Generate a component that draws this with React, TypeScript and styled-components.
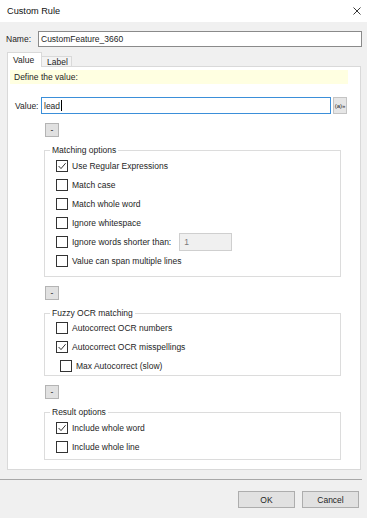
import React from 'react';
import styled, { createGlobalStyle } from 'styled-components';

interface Option {
  label: string;
  checked?: boolean;
  indent?: number;
  spin?: string;
}

interface Section {
  title: string;
  padTop: number;
  padBottom: number;
  options: Option[];
}

const sections: Section[] = [
  {
    title: 'Matching options',
    padTop: 1,
    padBottom: 6,
    options: [
      { label: 'Use Regular Expressions', checked: true },
      { label: 'Match case' },
      { label: 'Match whole word' },
      { label: 'Ignore whitespace' },
      { label: 'Ignore words shorter than:', spin: '1' },
      { label: 'Value can span multiple lines' },
    ],
  },
  {
    title: 'Fuzzy OCR matching',
    padTop: 0,
    padBottom: 0,
    options: [
      { label: 'Autocorrect OCR numbers' },
      { label: 'Autocorrect OCR misspellings', checked: true },
      { label: 'Max Autocorrect (slow)', indent: 4 },
    ],
  },
  {
    title: 'Result options',
    padTop: 1,
    padBottom: 3,
    options: [
      { label: 'Include whole word', checked: true },
      { label: 'Include whole line' },
    ],
  },
];

const App = () => {
  return (
    <Window>
      <GlobalStyle />
      <TitleBar>
        <Title>Custom Rule</Title>
        <CloseIcon viewBox="0 0 8 8">
          <path d="M0.5 0.5 L7.5 7.5 M7.5 0.5 L0.5 7.5" />
        </CloseIcon>
      </TitleBar>
      <Body>
        <NameRow>
          <NameLabel>Name:</NameLabel>
          <TextBox>CustomFeature_3660</TextBox>
        </NameRow>
        <TabStrip>
          <Tab $active>Value</Tab>
          <Tab>Label</Tab>
        </TabStrip>
        <TabPanel>
          <Hint>Define the value:</Hint>
          <ValueRow>
            <ValueLabel>Value:</ValueLabel>
            <TextBox $focused>
              lead
              <Caret />
            </TextBox>
            <InsertButton>(a)»</InsertButton>
          </ValueRow>
          {sections.map((section) => (
            <SectionBlock key={section.title}>
              <CollapseButton>-</CollapseButton>
              <GroupBox $padTop={section.padTop} $padBottom={section.padBottom}>
                <Caption>{section.title}</Caption>
                {section.options.map((opt) => (
                  <OptionRow key={opt.label} $indent={opt.indent || 0}>
                    <Checkbox>
                      {opt.checked && (
                        <svg width="10" height="10" viewBox="0 0 10 10">
                          <polyline
                            points="1.6,5 4,7.6 8.6,2.2"
                            fill="none"
                            stroke="#333"
                            strokeWidth="1"
                          />
                        </svg>
                      )}
                    </Checkbox>
                    <span>{opt.label}</span>
                    {opt.spin && <SpinBox>{opt.spin}</SpinBox>}
                  </OptionRow>
                ))}
              </GroupBox>
            </SectionBlock>
          ))}
        </TabPanel>
        <Separator />
        <Footer>
          <DialogButton>OK</DialogButton>
          <DialogButton>Cancel</DialogButton>
        </Footer>
      </Body>
    </Window>
  );
};

export default App;

const GlobalStyle = createGlobalStyle`
  html, body {
    margin: 0;
    padding: 0;
    background: #f0f0f0;
  }
  body {
    font-family: 'Liberation Sans', Arial, sans-serif;
    font-size: 8.5px;
    color: #1e1e1e;
  }
  * {
    box-sizing: border-box;
  }
`;

const Window = styled.div`
  width: 367px;
  height: 518px;
  display: flex;
  flex-direction: column;
  overflow: hidden;
  background: #f0f0f0;
`;

const TitleBar = styled.div`
  height: 22px;
  flex: none;
  display: flex;
  align-items: center;
  justify-content: space-between;
  padding: 0 6px 0 7px;
  background: #fff;
`;

const Title = styled.span`
  font-size: 9.2px;
  color: #111;
`;

const CloseIcon = styled.svg`
  width: 8px;
  height: 8px;
  stroke: #222;
  stroke-width: 0.9;
  fill: none;
`;

const Body = styled.div`
  flex: 1;
  display: flex;
  flex-direction: column;
  padding: 9px 5px 0 6px;
`;

const NameRow = styled.div`
  display: flex;
  align-items: center;
  height: 16px;
`;

const NameLabel = styled.span`
  width: 32px;
  flex: none;
`;

const TextBox = styled.div<{ $focused?: boolean }>`
  flex: 1;
  height: ${(p) => (p.$focused ? 17 : 16)}px;
  display: flex;
  align-items: center;
  padding: 0 2px;
  background: #fff;
  border: 1px solid ${(p) => (p.$focused ? '#3b8fd9' : '#8a8a8a')};
  white-space: nowrap;
`;

const Caret = styled.span`
  display: inline-block;
  width: 1px;
  height: 11px;
  margin-left: 0.5px;
  background: #000;
`;

const TabStrip = styled.div`
  display: flex;
  align-items: flex-end;
  margin: 5px 0 -1px 1px;
  position: relative;
  z-index: 1;
`;

const Tab = styled.div<{ $active?: boolean }>`
  width: ${(p) => (p.$active ? 35 : 31)}px;
  height: ${(p) => (p.$active ? 15 : 11)}px;
  margin-left: ${(p) => (p.$active ? 0 : -1)}px;
  display: flex;
  align-items: center;
  padding-left: ${(p) => (p.$active ? 5 : 5)}px;
  background: ${(p) => (p.$active ? '#fff' : '#f3f3f3')};
  border: 1px solid #d9d9d9;
  border-bottom: ${(p) => (p.$active ? 'none' : '1px solid #d9d9d9')};
`;

const TabPanel = styled.div`
  height: 404px;
  flex: none;
  margin: 0 1px;
  padding-top: 3px;
  background: #fff;
  border: 1px solid #d9d9d9;
`;

const Hint = styled.div`
  height: 14px;
  margin: 0 12px 0 2px;
  padding-left: 4px;
  line-height: 14px;
  background: #ffffe1;
`;

const ValueRow = styled.div`
  display: flex;
  align-items: center;
  gap: 2px;
  margin-top: 13px;
  padding: 0 13px 0 7px;
`;

const ValueLabel = styled.span`
  width: 24px;
  flex: none;
`;

const InsertButton = styled.div`
  width: 14px;
  height: 17px;
  flex: none;
  display: flex;
  align-items: center;
  justify-content: center;
  font-size: 6px;
  background: #e6e6e6;
  border: 1px solid #c4c4c4;
`;

const SectionBlock = styled.div`
  display: flex;
  flex-direction: column;
  align-items: flex-start;
  padding-left: 36px;
`;

const CollapseButton = styled.div`
  width: 14px;
  height: 14px;
  margin: 9px 0 8px 1px;
  display: flex;
  align-items: center;
  justify-content: center;
  background: #e1e1e1;
  border: 1px solid #b4b4b4;
  line-height: 1;
`;

const GroupBox = styled.fieldset<{ $padTop: number; $padBottom: number }>`
  width: 297px;
  min-width: 0;
  margin: 0;
  padding: ${(p) => p.$padTop}px 0 ${(p) => p.$padBottom}px 5px;
  border: 1px solid #dcdcdc;
`;

const Caption = styled.legend`
  padding: 0 2px;
  line-height: 10px;
  font-size: 8.5px;
`;

const OptionRow = styled.div<{ $indent: number }>`
  height: 19px;
  display: flex;
  align-items: center;
  margin-left: ${(p) => 6 + p.$indent}px;
`;

const Checkbox = styled.div`
  width: 12px;
  height: 12px;
  flex: none;
  margin-right: 4px;
  display: flex;
  align-items: center;
  justify-content: center;
  background: #fff;
  border: 1px solid #333;
`;

const SpinBox = styled.div`
  width: 53px;
  height: 18px;
  margin-left: 8px;
  display: flex;
  align-items: center;
  padding-left: 4px;
  color: #7a7a7a;
  background: #f0f0f0;
  border: 1px solid #cfcfcf;
`;

const Separator = styled.div`
  margin: 9px 0 0 -6px;
  border-top: 1px solid #a8a8a8;
`;

const Footer = styled.div`
  display: flex;
  justify-content: flex-end;
  gap: 7px;
  margin-top: 11px;
  padding-right: 3px;
`;

const DialogButton = styled.div`
  width: 57px;
  height: 17px;
  display: flex;
  align-items: center;
  justify-content: center;
  background: #e1e1e1;
  border: 1px solid #adadad;
`;
